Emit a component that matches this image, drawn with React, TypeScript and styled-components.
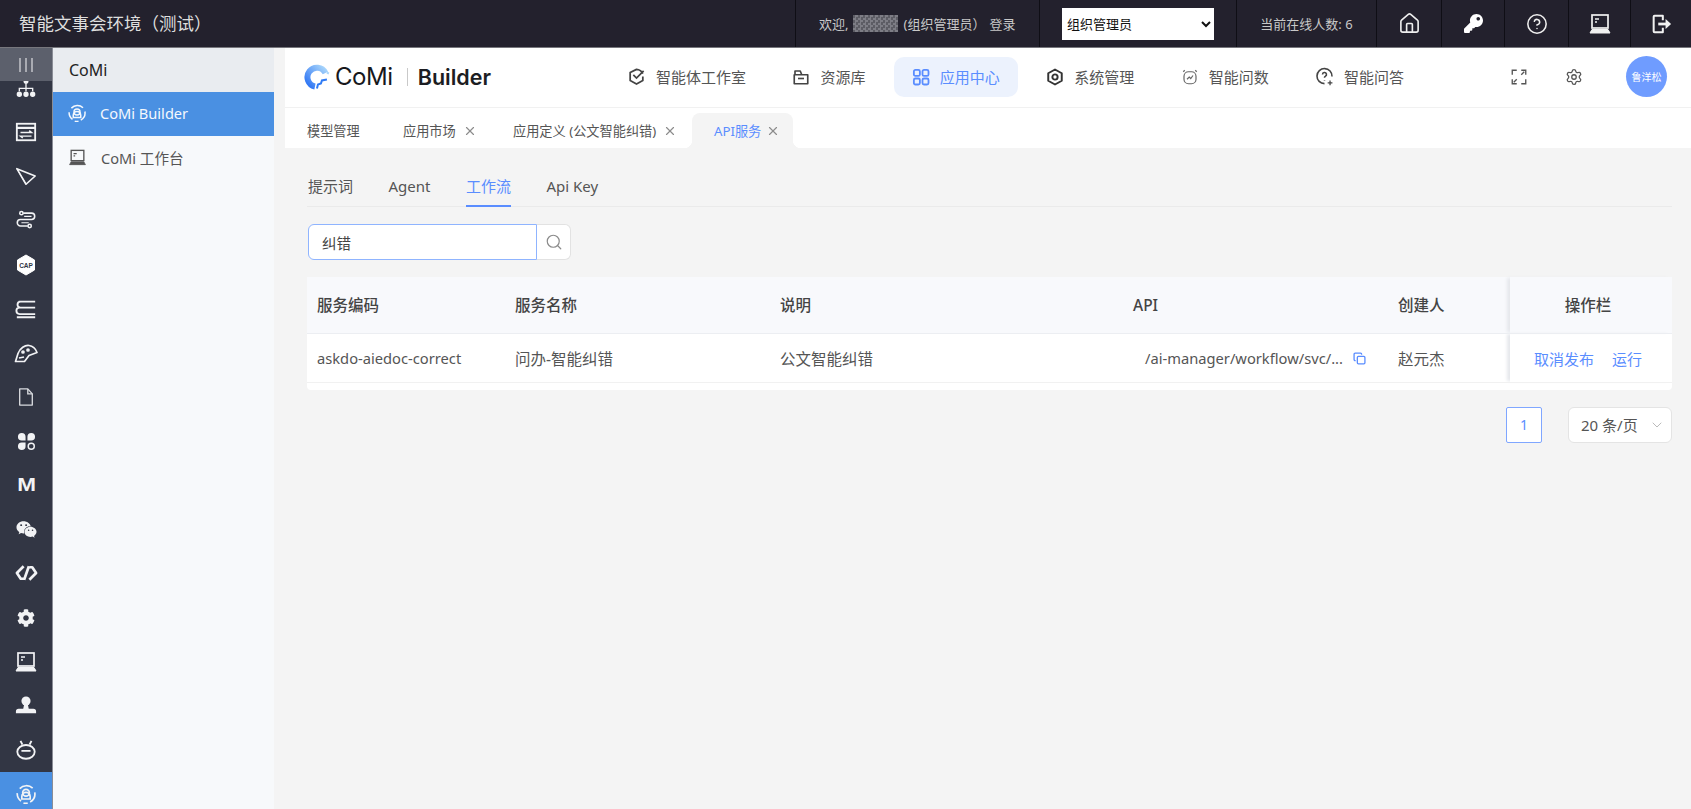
import React from "react";
import styled, { createGlobalStyle } from "styled-components";
import { ChevronDown, CircleHelp, Copy, House, Search, Settings, X } from "lucide-react";
import { FaCog, FaKey, FaWeixin } from "react-icons/fa";

const GlobalStyle = createGlobalStyle`
  html, body {
    margin: 0;
    height: 100%;
    overflow: hidden;
    background: #f4f4f4;
  }
  * {
    box-sizing: border-box;
  }
  body {
    font-family: "Noto Sans", "Noto Sans CJK SC", sans-serif;
    color: #333;
  }
`;

const Page = styled.div`
  width: 1691px;
  height: 809px;
  display: flex;
  flex-direction: column;
  overflow: hidden;
`;

const TopBar = styled.header`
  height: 48px;
  flex: none;
  display: flex;
  background: #23212d;
  border-bottom: 1px solid #77777d;
`;

const Title = styled.div`
  padding-left: 19px;
  font-size: 17.5px;
  line-height: 46px;
  color: #dedede;
  margin-right: auto;
`;

const TopCell = styled.div<{ $w: number; $left?: number }>`
  width: ${(p) => p.$w}px;
  display: flex;
  align-items: center;
  justify-content: ${(p) => (p.$left ? "flex-start" : "center")};
  padding-left: ${(p) => p.$left ?? 0}px;
  border-left: 1px solid #0f0e15;
  font-size: 13px;
  color: #c8c8c8;
  white-space: nowrap;
`;

const Mosaic = styled.span`
  display: inline-block;
  width: 45px;
  height: 17px;
  margin: 0 5px 0 5px;
  background: repeating-conic-gradient(#8d8d94 0 25%, #66666e 0 50%) 0 0 / 5px 5px;
  opacity: 0.85;
`;

const LoginLink = styled.span`
  margin-left: 4px;
`;

const RoleSelect = styled.select`
  width: 152px;
  height: 32px;
  border: none;
  border-radius: 0;
  padding-left: 1px;
  background: #fff;
  color: #111;
  font-family: inherit;
  font-size: 13px;
`;

const Body = styled.div`
  flex: 1;
  min-height: 0;
  display: flex;
`;

const Rail = styled.nav`
  position: relative;
  width: 53px;
  flex: none;
  padding-top: 18px;
  overflow: hidden;
  background: #323644;
  border-right: 1px solid #8a8d96;
`;

const RailToggle = styled.div`
  position: absolute;
  top: 0;
  left: 0;
  right: 0;
  height: 33px;
  display: flex;
  align-items: center;
  justify-content: center;
  gap: 4px;
  background: #5c606c;
  z-index: 1;

  span {
    width: 2px;
    height: 14px;
    background: #a9abb2;
  }
`;

const RailItem = styled.div<{ $active?: boolean }>`
  height: 44.13px;
  display: flex;
  align-items: center;
  justify-content: center;
  background: ${(p) => (p.$active ? "#4a90e2" : "transparent")};
  color: #f2f3f5;
`;

const RailLetter = styled.span`
  display: block;
  font-family: "Liberation Sans", sans-serif;
  font-size: 18px;
  font-weight: 700;
  line-height: 20px;
  transform: scaleX(1.25);
`;

const Sidebar = styled.aside`
  width: 221px;
  flex: none;
  background: #f7f9fb;
`;

const SidebarHead = styled.div`
  height: 44px;
  padding-left: 16px;
  font-size: 16px;
  line-height: 44px;
  color: #222;
  background: #e9ecf0;
`;

const SidebarItem = styled.div<{ $active?: boolean }>`
  height: 44px;
  padding: 0 0 2px 15px;
  display: flex;
  align-items: center;
  gap: 14px;
  font-size: 14.6px;
  background: ${(p) => (p.$active ? "#4a90e2" : "transparent")};
  color: ${(p) => (p.$active ? "#f4f8fd" : "#555")};
`;

const Main = styled.main`
  flex: 1;
  min-width: 0;
  margin-left: 11px;
  display: flex;
  flex-direction: column;
`;

const Header = styled.div`
  height: 60px;
  flex: none;
  display: flex;
  align-items: center;
  padding: 0 24px 2px 19px;
  background: #fff;
  border-bottom: 1px solid #f1f1f1;
`;

const Logo = styled.div`
  width: 187px;
  flex: none;
  display: flex;
  align-items: center;
`;

const LogoCoMi = styled.span`
  margin-left: 5px;
  font-family: Inter, sans-serif;
  font-size: 24px;
  font-weight: 400;
  letter-spacing: -0.4px;
  color: #17181c;
`;

const LogoRule = styled.span`
  width: 1px;
  height: 18px;
  margin: 0 10px 0 14px;
  background: #c9c9c9;
`;

const LogoBuilder = styled.span`
  font-family: Inter, sans-serif;
  font-size: 21.5px;
  font-weight: 600;
  color: #1c1d22;
`;

const Nav = styled.div`
  margin-left: 118px;
  display: flex;
  gap: 10.4px;
`;

const NavItem = styled.div<{ $active?: boolean }>`
  height: 40px;
  padding: 0 18px;
  display: flex;
  align-items: center;
  gap: 10px;
  border-radius: 10px;
  font-size: 15px;
  white-space: nowrap;
  background: ${(p) => (p.$active ? "#ecf2fd" : "transparent")};
  color: ${(p) => (p.$active ? "#5a8dff" : "#555")};
`;

const HeaderTools = styled.div`
  margin-left: auto;
  display: flex;
  align-items: center;
  color: #555;
`;

const GearWrap = styled.span`
  display: flex;
  margin: 0 43px 0 37px;
`;

const Avatar = styled.div`
  width: 41px;
  height: 41px;
  border-radius: 50%;
  display: flex;
  align-items: center;
  justify-content: center;
  background: #6f9cff;
  color: #fff;
  font-size: 10px;
`;

const TabBar = styled.div`
  height: 40px;
  flex: none;
  display: flex;
  align-items: flex-end;
  padding-left: 22px;
  background: #fff;
`;

const Tab = styled.div<{ $w: number; $active?: boolean }>`
  position: relative;
  width: ${(p) => p.$w}px;
  height: 35px;
  display: flex;
  align-items: center;
  gap: ${(p) => (p.$active ? 5 : 7)}px;
  padding-left: ${(p) => (p.$active ? 22 : 0)}px;
  font-size: 13.2px;
  white-space: nowrap;
  color: ${(p) => (p.$active ? "#5a8dff" : "#555")};
  background: ${(p) => (p.$active ? "#f4f4f4" : "transparent")};
  border-radius: 8px 8px 0 0;

  svg {
    color: #8c8c8c;
  }

  ${(p) =>
    p.$active &&
    `
    &::before, &::after {
      content: "";
      position: absolute;
      bottom: 0;
      width: 8px;
      height: 8px;
    }
    &::before {
      left: -8px;
      background: radial-gradient(circle at 0 0, #fff 8px, #f4f4f4 8.5px);
    }
    &::after {
      right: -8px;
      background: radial-gradient(circle at 100% 0, #fff 8px, #f4f4f4 8.5px);
    }
  `}
`;

const Content = styled.div`
  flex: 1;
  padding: 20px 19px 0 22px;
  background: #f4f4f4;
`;

const SubTabs = styled.div`
  height: 39px;
  display: flex;
  gap: 35.5px;
  padding-left: 1px;
  border-bottom: 1px solid #eaeaea;
`;

const SubTab = styled.div<{ $active?: boolean }>`
  height: 39px;
  font-size: 15px;
  line-height: 37px;
  color: ${(p) => (p.$active ? "#5a8dff" : "#555")};
  border-bottom: 2px solid ${(p) => (p.$active ? "#5a8dff" : "transparent")};
`;

const SearchRow = styled.div`
  margin: 17px 0 17px 1px;
  display: flex;
  height: 36px;
`;

const SearchInput = styled.input`
  width: 229px;
  height: 36px;
  padding: 0 13px;
  border: 1px solid #8fb4ff;
  border-radius: 6px 0 0 6px;
  outline: none;
  background: #fff;
  color: #444;
  font-family: inherit;
  font-size: 14.5px;
`;

const SearchButton = styled.div`
  width: 34px;
  display: flex;
  align-items: center;
  justify-content: center;
  background: #fff;
  border: 1px solid #e2e2e2;
  border-left: none;
  border-radius: 0 6px 6px 0;
  color: #8a8a8a;
`;

const TableWrap = styled.div`
  background: #fff;
  padding-bottom: 7px;
  border-radius: 0 0 4px 4px;
`;

const Table = styled.table`
  width: 100%;
  table-layout: fixed;
  border-collapse: collapse;
  font-size: 15.5px;
`;

const HeadCell = styled.th<{ $fixed?: boolean }>`
  height: 56px;
  padding: 0 ${(p) => (p.$fixed ? 6 : 0)}px 0 ${(p) => (p.$fixed ? 0 : 10)}px;
  text-align: ${(p) => (p.$fixed ? "center" : "left")};
  font-weight: 500;
  color: #444;
  background: #f8f9fc;
  border-bottom: 1px solid #eceef2;
  ${(p) => p.$fixed && "box-shadow: -4px 0 3px -1px #e6e8ec;"}
`;

const Cell = styled.td<{ $fixed?: boolean; $indent?: number; $latin?: boolean }>`
  height: 49px;
  padding: 1px ${(p) => (p.$fixed ? 6 : 0)}px 0 ${(p) => p.$indent ?? 10}px;
  color: #555;
  font-size: ${(p) => (p.$latin ? 14.7 : 15.5)}px;
  white-space: nowrap;
  border-bottom: 1px solid #f1f1f1;
  ${(p) => p.$fixed && "box-shadow: -4px 0 3px -1px #e6e8ec;"}
`;

const ApiText = styled.span`
  display: flex;
  align-items: center;
  gap: 10px;
  color: #555;

  svg {
    color: #5a8dff;
  }
`;

const Actions = styled.div`
  display: flex;
  justify-content: center;
  gap: 18px;
  font-size: 15px;
  color: #5a8dff;
`;

const Pagination = styled.div`
  margin-top: 17px;
  display: flex;
  justify-content: flex-end;
  gap: 26px;
`;

const PageBox = styled.div`
  width: 36px;
  height: 36px;
  display: flex;
  align-items: center;
  justify-content: center;
  border: 1px solid #7fa6ff;
  border-radius: 2px;
  background: #fff;
  color: #5a8dff;
  font-size: 14px;
`;

const SizeSelect = styled.div`
  width: 104px;
  height: 36px;
  padding: 0 6px 0 12px;
  display: flex;
  align-items: center;
  justify-content: space-between;
  border: 1px solid #e4e4e4;
  border-radius: 6px;
  background: #fff;
  color: #555;
  font-size: 15px;

  svg {
    color: #bbb;
  }
`;

const BotIcon = ({ size = 20 }: { size?: number }) => (
  <svg width={size} height={size} viewBox="0 0 24 24" fill="none" stroke="currentColor" strokeWidth="2">
    <path d="M4.500 5.500A11 11 0 0 1 20 5M1.500 11a11 11 0 0 0 4.500 9.500M22.500 10a11 11 0 0 1-5.500 11.500M9 23a11 11 0 0 0 5 0" />
    <circle cx="12" cy="10.500" r="4" />
    <path d="M7 18v-3a5 5 0 0 1 10 0v3zM16 10.500v4" />
  </svg>
);

const LaptopIcon = ({ size = 24 }: { size?: number }) => (
  <svg width={size} height={size} viewBox="0 0 24 24" fill="none" stroke="currentColor" strokeWidth="1.700">
    <rect x="4" y="3" width="16" height="13" />
    <path d="M7 7h4M7 10h2" strokeWidth="1.500" />
    <path d="M4 17.500h16l2 3.500H2z" fill="currentColor" strokeWidth="1" />
  </svg>
);

const railIcons: React.ReactNode[] = [
  <svg width="20" height="20" viewBox="0 0 24 24" fill="currentColor" stroke="currentColor" strokeWidth="1.600">
    <circle cx="12" cy="4" r="2.200" />
    <path d="M12 6v6M4 16v-3.500h16V16M12 12v4" fill="none" />
    <circle cx="4" cy="19.500" r="2.400" />
    <circle cx="12" cy="19.500" r="2.400" />
    <circle cx="20" cy="19.500" r="2.400" />
  </svg>,
  <svg width="22" height="22" viewBox="0 0 24 24" fill="none" stroke="currentColor" strokeWidth="2">
    <rect x="2" y="3" width="20" height="18" />
    <path d="M2 7.500h20" strokeWidth="2.400" />
    <path d="M6 12.500h12l-2.500-2M18 16.500H6l2.500 2" strokeWidth="1.600" />
  </svg>,
  <svg width="22" height="22" viewBox="0 0 24 24" fill="none" stroke="currentColor" strokeWidth="1.800">
    <path d="M2 4l20 8-10 9z" strokeLinejoin="round" />
    <path d="M2 4l10 17" strokeWidth="1" />
  </svg>,
  <svg width="22" height="22" viewBox="0 0 24 24" fill="none" stroke="currentColor" strokeWidth="1.700">
    <path d="M9 4.500h9a3.500 3.500 0 0 1 0 7H6a3.500 3.500 0 0 0 0 7h8" />
    <path d="M10 8h8M7 15h8" strokeWidth="1.300" />
    <circle cx="7" cy="4.500" r="1.800" />
    <circle cx="16" cy="18.500" r="1.800" />
  </svg>,
  <svg width="20" height="22" viewBox="0 0 20 22">
    <path d="M10 1l8.500 5v10L10 21l-8.500-5V6z" fill="#fff" stroke="#fff" strokeLinejoin="round" />
    <text x="10" y="13.500" textAnchor="middle" fontSize="6.500" fontWeight="700" fontFamily="Liberation Sans, sans-serif" fill="#323644">
      CAP
    </text>
  </svg>,
  <svg width="22" height="22" viewBox="0 0 24 24" fill="none" stroke="currentColor" strokeWidth="2">
    <path d="M22 4H6a3 3 0 0 0 0 6.500h16M22 10.500H5a3.500 3.500 0 0 0 0 7h17M4 4h16M2 21h20" />
  </svg>,
  <svg width="24" height="20" viewBox="0 0 24 20" fill="none" stroke="currentColor" strokeWidth="1.700">
    <path d="M1.500 18.500l2.500-8C6 5 11 2 15 2.500c4 .5 6.500 3 8 7l-8 3-4.500 6z" strokeLinejoin="round" />
    <circle cx="9" cy="9" r="1" fill="#fff" />
    <circle cx="14" cy="7" r="1" fill="#fff" />
    <path d="M5 15l5-1" />
  </svg>,
  <svg width="18" height="20" viewBox="0 0 20 22" fill="none" stroke="#d8dade" strokeWidth="1.500">
    <path d="M3 2h9l5 5.500V20H3z" strokeLinejoin="round" />
    <path d="M12 2v5.500h5" />
  </svg>,
  <svg width="19" height="19" viewBox="0 0 20 20" fill="currentColor">
    <path d="M1 5a4 4 0 0 1 8 0v4H5a4 4 0 0 1-4-4zM11 5a4 4 0 1 1 4 4h-4zM1 15a4 4 0 0 1 4-4h4v4a4 4 0 0 1-8 0z" />
    <circle cx="15" cy="15" r="3.200" fill="none" stroke="currentColor" strokeWidth="1.500" />
  </svg>,
  <RailLetter>M</RailLetter>,
  <FaWeixin size={21} />,
  <svg width="23" height="20" viewBox="0 0 24 20" fill="none" stroke="currentColor" strokeWidth="2.800" strokeLinejoin="round">
    <path d="M9 3L2 10l4 6h3M15 4h3l4 6-7 7M14.500 3L9.500 17" />
  </svg>,
  <FaCog size={18} />,
  <LaptopIcon />,
  <svg width="22" height="22" viewBox="0 0 24 24" fill="currentColor">
    <circle cx="12" cy="6.500" r="5" />
    <path d="M10 10h4l1 5h5a3 3 0 0 1 3 3v2H1v-2a3 3 0 0 1 3-3h5z" />
  </svg>,
  <svg width="22" height="22" viewBox="0 0 24 24" fill="none" stroke="currentColor" strokeWidth="2">
    <ellipse cx="12" cy="14" rx="9.500" ry="7.500" />
    <path d="M7 13h10M6 2l2 4M18 2l-2 4" />
  </svg>,
];

const CoMiMark = () => (
  <svg width="26" height="26" viewBox="0 0 26 26" fill="none">
    <defs>
      <linearGradient id="markGrad" x1="0" y1="1" x2="1" y2="0">
        <stop offset="0" stopColor="#2a72f4" />
        <stop offset="1" stopColor="#a9d6fb" />
      </linearGradient>
    </defs>
    <path d="M21.500 9A9.500 9.500 0 1 0 11 22.500" stroke="url(#markGrad)" strokeWidth="6" />
    <path d="M23 8.500l2 1" stroke="#a9d6fb" strokeWidth="2" />
    <path d="M13 24.500l1-4 3-1 1-3 5-1" stroke="#2f7bf5" strokeWidth="2" />
  </svg>
);

const AgentIcon = () => (
  <svg width="19" height="19" viewBox="0 0 24 24" fill="none" stroke="#444" strokeWidth="2.200">
    <path d="M20 8.500A9.500 9.500 0 0 0 12 3L4 7v10l8 4.500 8-4.500v-5" strokeLinejoin="round" />
    <path d="M8 10l4 4 9-9" />
  </svg>
);

const LibraryIcon = () => (
  <svg width="18" height="18" viewBox="0 0 24 24" fill="none" stroke="#444" strokeWidth="2.200">
    <path d="M3 21V9h18v12zM4 9V4h7l2 5" strokeLinejoin="round" />
    <path d="M8 14h8" />
  </svg>
);

const AppsIcon = () => (
  <svg width="18" height="18" viewBox="0 0 24 24" fill="none" stroke="#5a8dff" strokeWidth="2.400">
    <rect x="2.500" y="2.500" width="8" height="8" rx="2" />
    <rect x="14" y="2.500" width="8" height="8" rx="2" />
    <rect x="2.500" y="14" width="8" height="8" rx="2" />
    <rect x="14" y="14" width="8" height="8" rx="2" />
  </svg>
);

const SystemIcon = () => (
  <svg width="18" height="18" viewBox="0 0 24 24" fill="none" stroke="#333" strokeWidth="2.600">
    <path d="M12 2l9 5v10l-9 5-9-5V7z" strokeLinejoin="round" />
    <circle cx="12" cy="12" r="3.500" />
  </svg>
);

const DataIcon = () => (
  <svg width="18" height="18" viewBox="0 0 24 24" fill="none" stroke="#666" strokeWidth="1.600">
    <path d="M5 3L3 5M19 3l2 2" />
    <rect x="4" y="5" width="16" height="16" rx="6" />
    <path d="M8 15l3-3 2 2 3-4" />
  </svg>
);

const AskIcon = () => (
  <svg width="19" height="19" viewBox="0 0 24 24" fill="none" stroke="#444" strokeWidth="2">
    <path d="M12 21A9.500 9.500 0 1 1 21.500 12" />
    <path d="M9.500 9.500a2.500 2.500 0 1 1 3.500 2.300c-.7.400-1 .9-1 1.700M12 16.500v.5" />
    <path d="M16 20h6M19 17v6" strokeWidth="1.600" />
  </svg>
);

const FullscreenIcon = () => (
  <svg width="18" height="18" viewBox="0 0 24 24" fill="none" stroke="#555" strokeWidth="1.800">
    <path d="M9 3H3v6M15 3h6v6M3 15v6h6M21 15v6h-6M19 5l-4 4M5 19l4-4" />
  </svg>
);

const LogoutIcon = () => (
  <svg width="22" height="22" viewBox="0 0 24 24" fill="none" stroke="#f1f1f1" strokeWidth="2.200">
    <path d="M14 8V3H5a1 1 0 0 0-1 1v16a1 1 0 0 0 1 1h9v-5" strokeLinejoin="round" />
    <path d="M9 12h9" strokeWidth="3" />
    <path d="M17 6.500l6 5.500-6 5.500z" fill="#f1f1f1" stroke="none" />
  </svg>
);

export default function App() {
  return (
    <Page>
      <GlobalStyle />
      <TopBar>
        <Title>智能文事会环境（测试）</Title>
        <TopCell $w={244} $left={23}>
          欢迎,
          <Mosaic />
          (组织管理员）
          <LoginLink>登录</LoginLink>
        </TopCell>
        <TopCell $w={197}>
          <RoleSelect defaultValue="组织管理员">
            <option>组织管理员</option>
          </RoleSelect>
        </TopCell>
        <TopCell $w={140}>当前在线人数: 6</TopCell>
        <TopCell $w={65}>
          <House size={23} color="#eee" strokeWidth={1.700} />
        </TopCell>
        <TopCell $w={63}>
          <FaKey size={19} color="#fff" />
        </TopCell>
        <TopCell $w={64}>
          <CircleHelp size={22} color="#eee" strokeWidth={1.700} />
        </TopCell>
        <TopCell $w={62}>
          <span style={{ color: "#f1f1f1", display: "flex" }}>
            <LaptopIcon />
          </span>
        </TopCell>
        <TopCell $w={61}>
          <LogoutIcon />
        </TopCell>
      </TopBar>
      <Body>
        <Rail>
          <RailToggle>
            <span />
            <span />
            <span />
          </RailToggle>
          {railIcons.map((icon, index) => (
            <RailItem key={index}>{icon}</RailItem>
          ))}
          <RailItem $active>
            <BotIcon />
          </RailItem>
        </Rail>
        <Sidebar>
          <SidebarHead>CoMi</SidebarHead>
          <SidebarItem $active>
            <BotIcon size={18} />
            CoMi Builder
          </SidebarItem>
          <SidebarItem>
            <LaptopIcon size={19} />
            CoMi 工作台
          </SidebarItem>
        </Sidebar>
        <Main>
          <Header>
            <Logo>
              <CoMiMark />
              <LogoCoMi>CoMi</LogoCoMi>
              <LogoRule />
              <LogoBuilder>Builder</LogoBuilder>
            </Logo>
            <Nav>
              <NavItem>
                <AgentIcon />
                智能体工作室
              </NavItem>
              <NavItem>
                <LibraryIcon />
                资源库
              </NavItem>
              <NavItem $active>
                <AppsIcon />
                应用中心
              </NavItem>
              <NavItem>
                <SystemIcon />
                系统管理
              </NavItem>
              <NavItem>
                <DataIcon />
                智能问数
              </NavItem>
              <NavItem>
                <AskIcon />
                智能问答
              </NavItem>
            </Nav>
            <HeaderTools>
              <FullscreenIcon />
              <GearWrap>
                <Settings size={18} strokeWidth={1.700} />
              </GearWrap>
              <Avatar>鲁洋松</Avatar>
            </HeaderTools>
          </Header>
          <TabBar>
            <Tab $w={96}>模型管理</Tab>
            <Tab $w={110}>
              应用市场
              <X size={14} />
            </Tab>
            <Tab $w={179}>
              应用定义 (公文智能纠错)
              <X size={14} />
            </Tab>
            <Tab $w={101} $active>
              API服务
              <X size={14} />
            </Tab>
          </TabBar>
          <Content>
            <SubTabs>
              <SubTab>提示词</SubTab>
              <SubTab>Agent</SubTab>
              <SubTab $active>工作流</SubTab>
              <SubTab>Api Key</SubTab>
            </SubTabs>
            <SearchRow>
              <SearchInput defaultValue="纠错" />
              <SearchButton>
                <Search size={18} strokeWidth={1.600} />
              </SearchButton>
            </SearchRow>
            <TableWrap>
              <Table>
                <colgroup>
                  <col width={198} />
                  <col width={265} />
                  <col width={353} />
                  <col width={265} />
                  <col width={122} />
                  <col width={162} />
                </colgroup>
                <thead>
                  <tr>
                    <HeadCell>服务编码</HeadCell>
                    <HeadCell>服务名称</HeadCell>
                    <HeadCell>说明</HeadCell>
                    <HeadCell>API</HeadCell>
                    <HeadCell>创建人</HeadCell>
                    <HeadCell $fixed>操作栏</HeadCell>
                  </tr>
                </thead>
                <tbody>
                  <tr>
                    <Cell $latin>askdo-aiedoc-correct</Cell>
                    <Cell>问办-智能纠错</Cell>
                    <Cell>公文智能纠错</Cell>
                    <Cell $indent={22} $latin>
                      <ApiText>
                        /ai-manager/workflow/svc/...
                        <Copy size={13} strokeWidth={2.400} />
                      </ApiText>
                    </Cell>
                    <Cell>赵元杰</Cell>
                    <Cell $fixed $indent={0}>
                      <Actions>
                        <span>取消发布</span>
                        <span>运行</span>
                      </Actions>
                    </Cell>
                  </tr>
                </tbody>
              </Table>
            </TableWrap>
            <Pagination>
              <PageBox>1</PageBox>
              <SizeSelect>
                20 条/页
                <ChevronDown size={16} strokeWidth={1.500} />
              </SizeSelect>
            </Pagination>
          </Content>
        </Main>
      </Body>
    </Page>
  );
}
